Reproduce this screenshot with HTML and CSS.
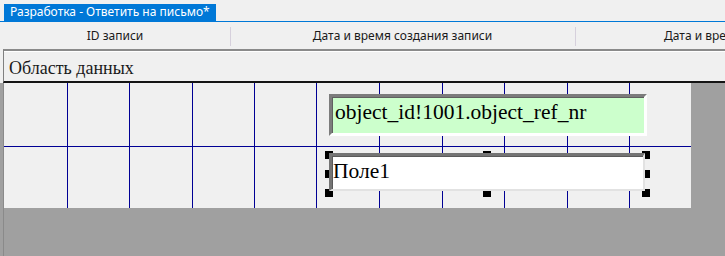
FILE: index.html
```html
<!DOCTYPE html>
<html lang="ru">
<head>
  <meta charset="UTF-8" />
  <title>Разработка - Ответить на письмо*</title>
  <link rel="stylesheet" href="styles.css">
</head>
<body>

  <!-- Вкладка документа -->
  <div class="tabs">
    <div class="tab">Разработка - Ответить на письмо*</div>
  </div>

  <!-- Заголовки колонок -->
  <div class="columns">
    <div class="col">ID записи</div>
    <div class="col">Дата и время создания записи</div>
    <div class="col col-last">Дата и время изменения записи</div>
  </div>

  <!-- Область данных -->
  <div class="band-wrap">
    <div class="band-title">Область данных</div>
  </div>

  <div class="surface-wrap">
    <div class="surface">
      <div class="canvas">
        <svg class="grid" width="687" height="125" viewBox="0 0 687 125">
          <g stroke="#000094" stroke-width="1">
            <line x1="63.5" y1="0" x2="63.5" y2="125"/>
            <line x1="125.5" y1="0" x2="125.5" y2="125"/>
            <line x1="188.5" y1="0" x2="188.5" y2="125"/>
            <line x1="250.5" y1="0" x2="250.5" y2="125"/>
            <line x1="312.5" y1="0" x2="312.5" y2="125"/>
            <line x1="375.5" y1="0" x2="375.5" y2="125"/>
            <line x1="438.5" y1="0" x2="438.5" y2="125"/>
            <line x1="500.5" y1="0" x2="500.5" y2="125"/>
            <line x1="563.5" y1="0" x2="563.5" y2="125"/>
            <line x1="625.5" y1="0" x2="625.5" y2="125"/>
            <line x1="0" y1="63.5" x2="687" y2="63.5"/>
          </g>
        </svg>

        <div class="field field-bound">object_id!1001.object_ref_nr</div>

        <div class="selection">
          <span class="handle h-tl"></span>
          <span class="handle h-tm"></span>
          <span class="handle h-tr"></span>
          <span class="handle h-ml"></span>
          <span class="handle h-mr"></span>
          <span class="handle h-bl"></span>
          <span class="handle h-bm"></span>
          <span class="handle h-br"></span>
          <div class="field field-label">Поле1</div>
        </div>
      </div>
    </div>
  </div>

</body>
</html>
```

FILE: styles.css
```css
body {
  margin: 0;
  height: 256px;
  overflow: hidden;
  background-color: #a0a0a0;
  font-family: 'Noto Sans', sans-serif;
  font-size: 12px;
  color: #1a1a1a;
}

/* Вкладка */
.tabs {
  height: 22px;
  padding: 4px 0 0 4px;
  box-sizing: border-box;
  background-color: #f0f0f0;
  border-bottom: 1px solid #0078d7;
  display: flex;
}

.tab {
  height: 17px;
  line-height: 16px;
  padding: 0 6px;
  background-color: #0078d7;
  color: #fff;
  white-space: nowrap;
}

/* Заголовки колонок */
.columns {
  height: 27px;
  background-color: #f0f0f0;
  display: flex;
  overflow: hidden;
  white-space: nowrap;
}

.col {
  flex: 0 0 auto;
  width: 345px;
  line-height: 27px;
  text-align: center;
  position: relative;
}

.col:first-child {
  width: 230px;
}

.col-last {
  text-align: left;
  padding-left: 89px;
  box-sizing: border-box;
  width: 400px;
}

.col + .col::before {
  content: "";
  position: absolute;
  left: 0;
  top: 5px;
  height: 19px;
  width: 1px;
  background-color: #d6d0dc;
}

/* Область данных */
.band-wrap {
  background-color: #f0f0f0;
  padding-left: 3px;
}

.band-title {
  border-left: 1px solid #808080;
  border-top: 2px solid #8a8a8a;
  border-bottom: 2px solid #141414;
  box-shadow: inset 0 1px 0 #fff;
  height: 23px;
  padding: 7px 0 0 5px;
  font-family: 'Liberation Serif', serif;
  font-size: 18px;
  line-height: 20px;
}

.surface-wrap {
  padding-left: 3px;
}

.surface {
  border-left: 1px solid #8a8a8a;
  height: 174px;
}

.canvas {
  position: relative;
  width: 687px;
  height: 125px;
  background-color: #f0f0f0;
}

.grid {
  position: absolute;
  top: 0;
  left: 0;
}

/* Поля отчёта */
.field {
  position: absolute;
  box-sizing: border-box;
  font-family: 'Liberation Serif', serif;
  font-size: 21.5px;
  color: #000;
  white-space: nowrap;
  overflow: hidden;
}

.field-bound {
  left: 325px;
  top: 11px;
  width: 318px;
  height: 42px;
  background-color: #ccffcc;
  border-style: solid;
  border-width: 3px;
  border-color: #7c7c7c #fff #fff #7c7c7c;
  box-shadow: inset 1px 1px 0 #606060;
  padding-left: 3px;
  line-height: 30px;
}

.selection {
  position: absolute;
  left: 321px;
  top: 68px;
  width: 325px;
  height: 46px;
}

.field-label {
  left: 4px;
  top: 2px;
  width: 316px;
  height: 38px;
  background-color: #fff;
  border-style: solid;
  border-width: 3px 2px 2px 3px;
  border-color: #747474 #e2e2e2 #e2e2e2 #747474;
  box-shadow: inset 1px 1px 0 #5a5a5a;
  padding-left: 1px;
  line-height: 31px;
}

.handle {
  position: absolute;
  width: 8px;
  height: 8px;
  background-color: #000;
}

.h-tl { left: 0; top: 0; }
.h-tm { left: 158px; top: 0; }
.h-tr { left: 317px; top: 0; }
.h-ml { left: 0; top: 19px; }
.h-mr { left: 317px; top: 19px; }
.h-bl { left: 0; top: 38px; }
.h-bm { left: 158px; top: 38px; }
.h-br { left: 317px; top: 38px; }
```
